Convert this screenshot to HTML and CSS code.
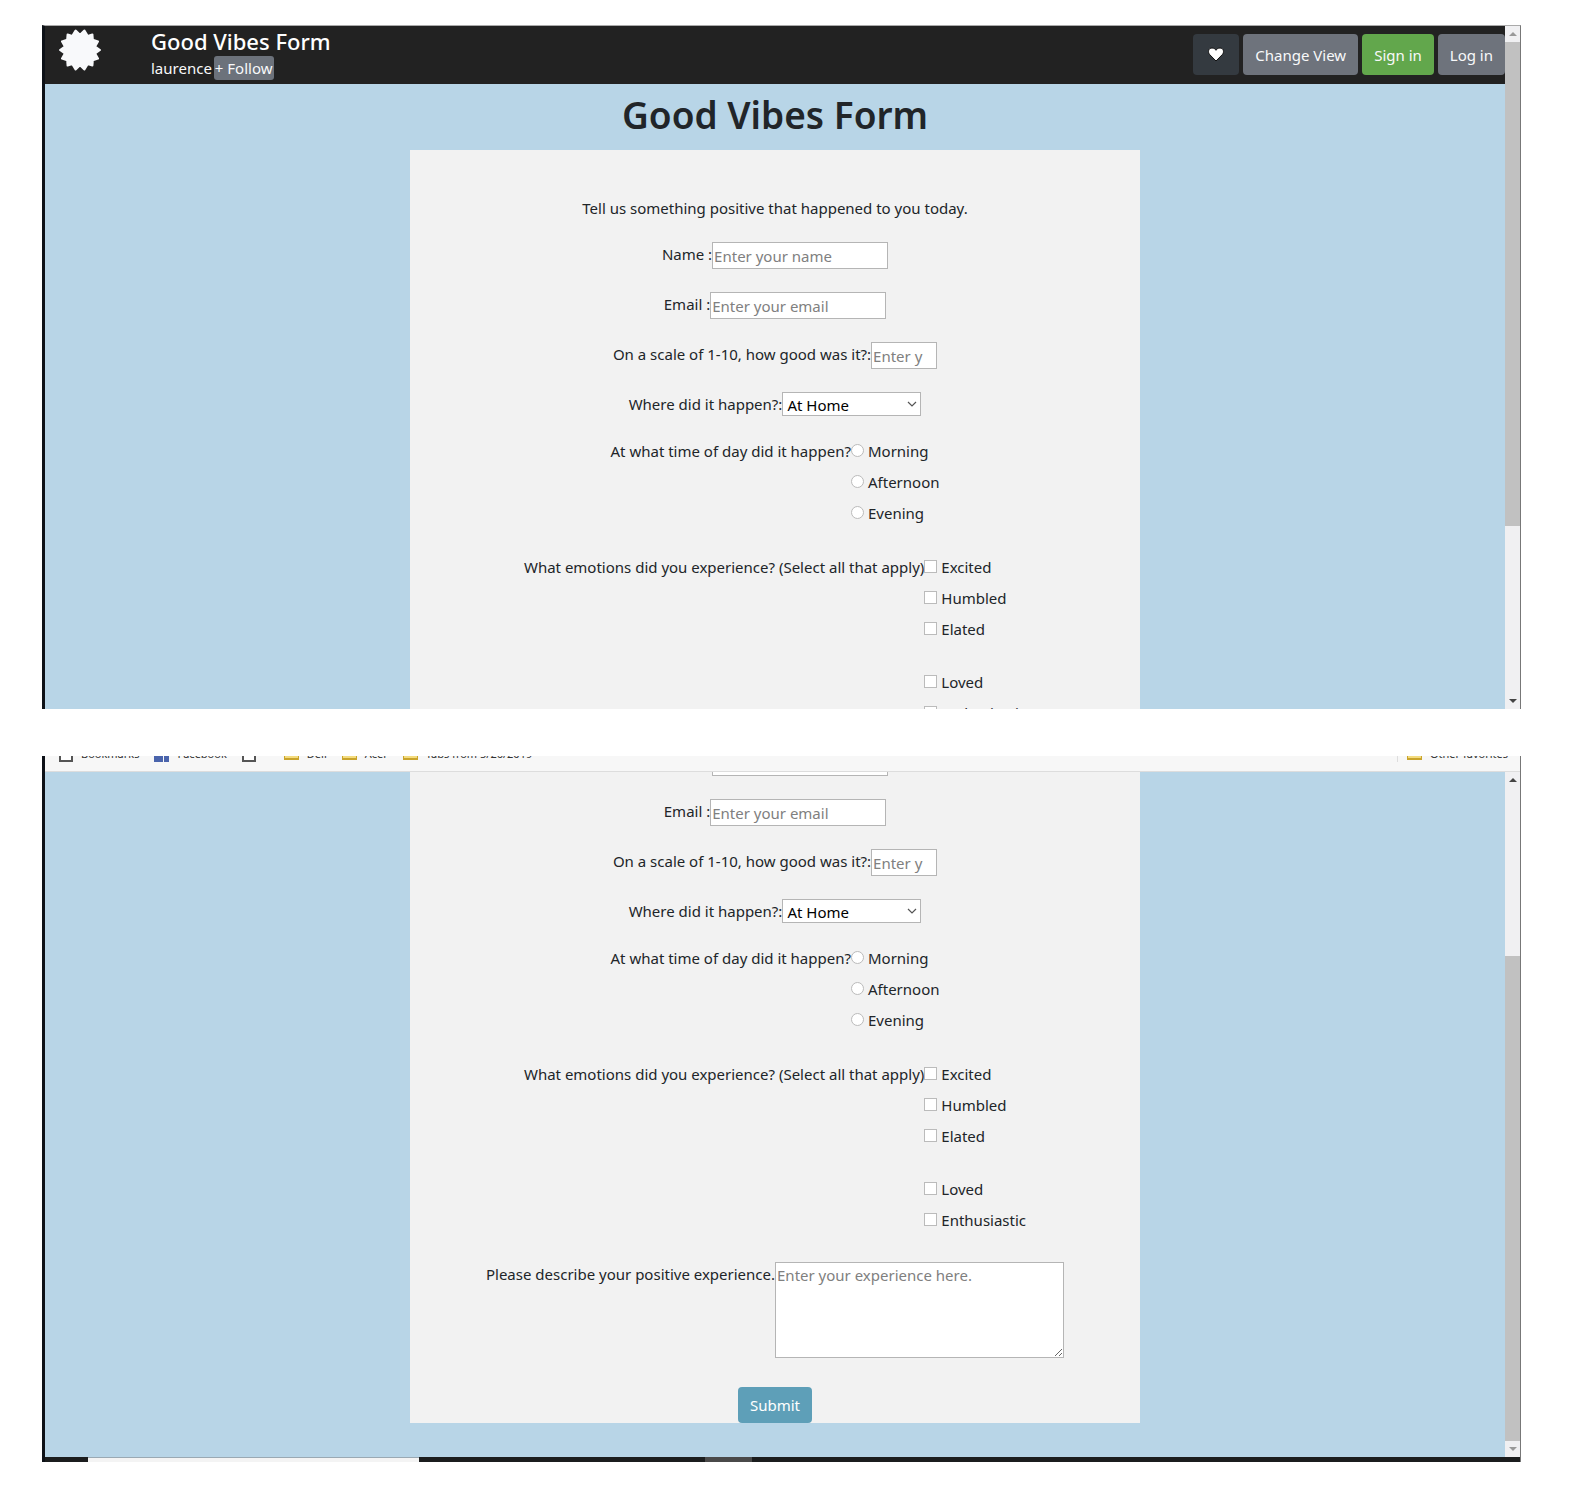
FILE: index.html
```html
<!DOCTYPE html>
<html lang="en">
<head>
<meta charset="utf-8">
<meta name="viewport" content="width=device-width, initial-scale=1">
<title>Good Vibes Form</title>
<link rel="stylesheet" href="styles.css">
</head>
<body>
<main class="sheet">

  <section class="shot shot-top">
    <div class="view">
      <header class="topbar">
        <svg class="logo" viewBox="-20 -20 40 40" aria-hidden="true"><path fill="#f8f9fb" stroke="#f8f9fb" stroke-width="2" stroke-linejoin="round" d="M4.2 -18.5L7.4 -13.300L11.8 -14.8L12.2 -9.700L17.1 -8.2L14.400 -3.300L19.0 0L14.400 3.300L17.1 8.2L12.2 9.700L11.8 14.8L7.4 13.300L4.2 18.5L0 14.600L-4.2 18.5L-7.4 13.300L-11.8 14.8L-12.2 9.700L-17.1 8.2L-14.400 3.300L-19.0 0L-14.400 -3.300L-17.1 -8.2L-12.2 -9.700L-11.8 -14.8L-7.4 -13.300L-4.2 -18.5L0 -14.600Z"/></svg>
        <div class="pen">
          <div class="pen-title">Good Vibes Form</div>
          <div class="pen-owner"><a class="owner" href="#">laurence</a><button class="follow" type="button">+ Follow</button></div>
        </div>
        <div class="actions">
          <button class="btn btn-heart" type="button" aria-label="Love"><svg width="16" height="15" viewBox="0 0 16 15"><path fill="#fff" stroke="#111" stroke-width="1" d="M8 14L1.700 7.600C-.6 5 .6 1 4 1C6 1 7.300 2 8 3.300C8.700 2 10 1 12 1C15.400 1 16.600 5 14.300 7.600Z"/></svg></button>
          <button class="btn" type="button">Change View</button>
          <button class="btn btn-green" type="button">Sign in</button>
          <button class="btn" type="button">Log in</button>
        </div>
      </header>
      <div class="page">
        <h1 class="heading">Good Vibes Form</h1>
        <form class="card card-full">
          <p class="intro">Tell us something positive that happened to you today.</p>
          <div class="row"><label for="name-a">Name :</label><input class="field" id="name-a" type="text" placeholder="Enter your name"></div>
          <div class="row"><label for="email-a">Email :</label><input class="field" id="email-a" type="email" placeholder="Enter your email"></div>
          <div class="row"><label for="scale-a">On a scale of 1-10, how good was it?:</label><input class="field field-short" id="scale-a" type="text" placeholder="Enter y"></div>
          <div class="row"><label for="where-a">Where did it happen?:</label><span class="select"><select id="where-a"><option>At Home</option></select><svg class="chevron" width="10" height="6" viewBox="0 0 10 6"><path fill="none" stroke="#555" stroke-width="1.200" d="M1 1L5 5L9 1"/></svg></span></div>
          <div class="row" role="group" aria-labelledby="time-a"><span id="time-a">At what time of day did it happen?</span>
            <div class="options">
              <label class="option"><input type="radio" name="time-a">Morning</label>
              <label class="option"><input type="radio" name="time-a">Afternoon</label>
              <label class="option"><input type="radio" name="time-a">Evening</label>
            </div>
          </div>
          <div class="row" role="group" aria-labelledby="mood-a"><span id="mood-a">What emotions did you experience? (Select all that apply)</span>
            <div class="options">
              <label class="option"><input type="checkbox">Excited</label>
              <label class="option"><input type="checkbox">Humbled</label>
              <label class="option option-last"><input type="checkbox">Elated</label>
              <label class="option"><input type="checkbox">Loved</label>
              <label class="option"><input type="checkbox">Enthusiastic</label>
            </div>
          </div>
        </form>
      </div>
    </div>
    <div class="scroll" aria-hidden="true">
      <span class="arrow up faint"></span><span class="thumb"></span><span class="track"></span><span class="arrow down"></span>
    </div>
  </section>

  <section class="shot shot-bottom">
    <nav class="bookmarks" aria-label="Favorites">
      <a class="mark mark-1" href="#"><i class="ico-page"></i>Bookmarks</a>
      <a class="mark mark-2" href="#"><i class="ico-blocks"></i>Facebook</a>
      <a class="mark mark-3" href="#" aria-label="Page"><i class="ico-page"></i></a>
      <a class="mark mark-4" href="#"><i class="ico-folder"></i>Dell</a>
      <a class="mark mark-5" href="#"><i class="ico-folder"></i>Acer</a>
      <a class="mark" href="#"><i class="ico-folder"></i>Tabs from 5/26/2019</a>
      <a class="mark mark-other" href="#"><i class="ico-folder"></i>Other favorites</a>
    </nav>
    <div class="view view-end">
      <div class="page page-end">
        <form class="card">
          <div class="row"><label for="name-b">Name :</label><input class="field" id="name-b" type="text"></div>
          <div class="row"><label for="email-b">Email :</label><input class="field" id="email-b" type="email" placeholder="Enter your email"></div>
          <div class="row"><label for="scale-b">On a scale of 1-10, how good was it?:</label><input class="field field-short" id="scale-b" type="text" placeholder="Enter y"></div>
          <div class="row"><label for="where-b">Where did it happen?:</label><span class="select"><select id="where-b"><option>At Home</option></select><svg class="chevron" width="10" height="6" viewBox="0 0 10 6"><path fill="none" stroke="#555" stroke-width="1.200" d="M1 1L5 5L9 1"/></svg></span></div>
          <div class="row" role="group" aria-labelledby="time-b"><span id="time-b">At what time of day did it happen?</span>
            <div class="options">
              <label class="option"><input type="radio" name="time-b">Morning</label>
              <label class="option"><input type="radio" name="time-b">Afternoon</label>
              <label class="option"><input type="radio" name="time-b">Evening</label>
            </div>
          </div>
          <div class="row" role="group" aria-labelledby="mood-b"><span id="mood-b">What emotions did you experience? (Select all that apply)</span>
            <div class="options">
              <label class="option"><input type="checkbox">Excited</label>
              <label class="option"><input type="checkbox">Humbled</label>
              <label class="option option-last"><input type="checkbox">Elated</label>
              <label class="option"><input type="checkbox">Loved</label>
              <label class="option"><input type="checkbox">Enthusiastic</label>
            </div>
          </div>
          <div class="row"><label for="story">Please describe your positive experience.</label><textarea class="story" id="story" placeholder="Enter your experience here."></textarea></div>
          <button class="submit" type="submit">Submit</button>
        </form>
      </div>
    </div>
    <div class="scroll" aria-hidden="true">
      <span class="arrow up"></span><span class="track"></span><span class="thumb"></span><span class="arrow down faint"></span>
    </div>
    <div class="taskbar" aria-hidden="true"><span class="task-open"></span><span class="task-idle"></span></div>
  </section>

</main>
</body>
</html>
```
FILE: styles.css
```css
* { box-sizing: border-box; }

body {
  margin: 0;
  background: #fff;
  color: #212529;
  font: 15px/24px "Noto Sans", "Open Sans", sans-serif;
}

.sheet {
  display: flex;
  flex-direction: column;
  gap: 47px;
  padding: 25px 55px 45px 42px;
}

.shot {
  display: grid;
  grid-template-columns: minmax(0, 1fr) 15px;
  border-left: 3px solid #0d1117;
  border-right: 1px solid #777;
  overflow: hidden;
}

.shot-top { height: 684px; border-top: 1px solid #aaa; }
.shot-bottom { height: 706px; grid-template-rows: 16px minmax(0, 1fr) 5px; }

.view { overflow: hidden; background: #b8d5e7; }
.view-end { display: flex; flex-direction: column; justify-content: flex-end; }

/* top bar */
.topbar {
  display: flex;
  align-items: flex-start;
  height: 58px;
  padding-left: 14px;
  background: #222;
  color: #fff;
}
.logo { width: 42px; height: 42px; margin-top: 3px; }
.pen { margin-left: 50px; }
.pen-title { font-size: 22px; line-height: 30px; font-weight: 500; }
.pen-owner { display: flex; gap: 2px; line-height: 24px; }
.owner { color: #f8f9fa; text-decoration: none; }
.follow {
  height: 24px;
  padding: 0 1px;
  border: 0;
  border-radius: 3px;
  background: #6c727b;
  color: #f8f9fa;
  font: inherit;
}
.actions { display: flex; gap: 4px; margin: 8px 0 0 auto; }
.btn {
  height: 41px;
  padding: 0 12px;
  border: 0;
  border-radius: 4px;
  background: #6e737c;
  color: #f8f9fa;
  font: inherit;
}
.btn-heart { display: grid; place-items: center; width: 46px; background: #343a40; }
.btn-green { background: #62a74c; }

/* form */
.page { display: flex; flex-direction: column; align-items: center; }
.page-end { padding-bottom: 34px; }
.heading { margin: 0; font-size: 37px; line-height: 62px; font-weight: 600; padding-bottom: 4px; }
.card {
  display: flex;
  flex-direction: column;
  align-items: center;
  gap: 23px;
  width: 50%;
  background: #f2f2f2;
}
.card-full { padding-top: 46px; }
.intro { margin: 0 0 -1px; }
.row { display: flex; justify-content: center; white-space: nowrap; }
.field {
  width: 176px;
  height: 27px;
  padding: 0 1px;
  border: 1px solid #b5b5b5;
  background: #fff;
  font: inherit;
}
.field-short { width: 66px; }
.field::placeholder, .story::placeholder { color: #808080; opacity: 1; }
.select { position: relative; display: block; }
.select select {
  display: block;
  appearance: none;
  width: 139px;
  height: 24px;
  padding: 0 4px;
  border: 1px solid #b5b5b5;
  border-radius: 0;
  background: #fff;
  color: #000;
  font: inherit;
}
.chevron { position: absolute; right: 4px; top: 9px; pointer-events: none; }
.options { display: flex; flex-direction: column; }
.option { display: flex; align-items: center; gap: 4px; margin-bottom: 7px; }
.option-last { margin-bottom: 29px; }
.option input {
  appearance: none;
  width: 13px;
  height: 13px;
  margin: 0 0 2px;
  border: 1px solid #bbb;
  background: #fff;
}
.option input[type="radio"] { border-radius: 50%; }
.story {
  width: 289px;
  height: 96px;
  padding: 0 1px;
  border: 1px solid #b5b5b5;
  background: #fff;
  font: inherit;
  resize: both;
}
.submit {
  height: 36px;
  margin-top: 6px;
  padding: 0 12px;
  border: 0;
  border-radius: 4px;
  background: #5e9fb8;
  color: #fff;
  font: inherit;
}

/* scroll bars */
.scroll { display: flex; flex-direction: column; background: #f0f0f2; }
.arrow { display: grid; place-items: center; height: 16px; }
.arrow::before { content: ""; border: 4px solid transparent; }
.up::before { border-top: 0; border-bottom-color: #444; }
.down::before { border-bottom: 0; border-top-color: #444; }
.up.faint::before { border-bottom-color: #999; }
.down.faint::before { border-top-color: #999; }
.thumb { flex: 485; background: #c1c1c1; }
.track { flex: 168; }

/* favorites strip */
.bookmarks {
  grid-column: 1 / -1;
  display: flex;
  align-items: flex-start;
  height: 16px;
  padding: 0 12px 0 14px;
  border-bottom: 1px solid #ddd;
  background: #f7f7f7;
  font-size: 11px;
  line-height: 16px;
  overflow: hidden;
}
.mark { display: flex; align-items: flex-end; gap: 8px; height: 16px; margin-top: -10px; color: #333; text-decoration: none; white-space: nowrap; }
.mark-1, .mark-2, .mark-4, .mark-5 { margin-right: 15px; }
.mark-3 { margin-right: 28px; }
.mark-other { margin-left: auto; padding-left: 9px; border-left: 1px solid #ddd; }
.ico-page { width: 14px; height: 15px; border: 2px solid #555; background: #fff; }
.ico-blocks { width: 15px; height: 16px; background: linear-gradient(90deg, #4a64ac 9px, #f7f7f7 9px 10px, #4a64ac 10px); }
.ico-folder { width: 15px; height: 12px; margin-bottom: 2px; border: 1px solid #c9a42c; border-bottom-width: 2px; background: #f4dc80; }

/* taskbar edge */
.taskbar { grid-column: 1 / -1; display: flex; background: #1b1d1e; }
.task-open { width: 331px; margin-left: 43px; border-top: 1px solid #9aa9b3; background: #f4f4f4; }
.task-idle { width: 47px; margin-left: 286px; background: #4a4a4a; }
```
